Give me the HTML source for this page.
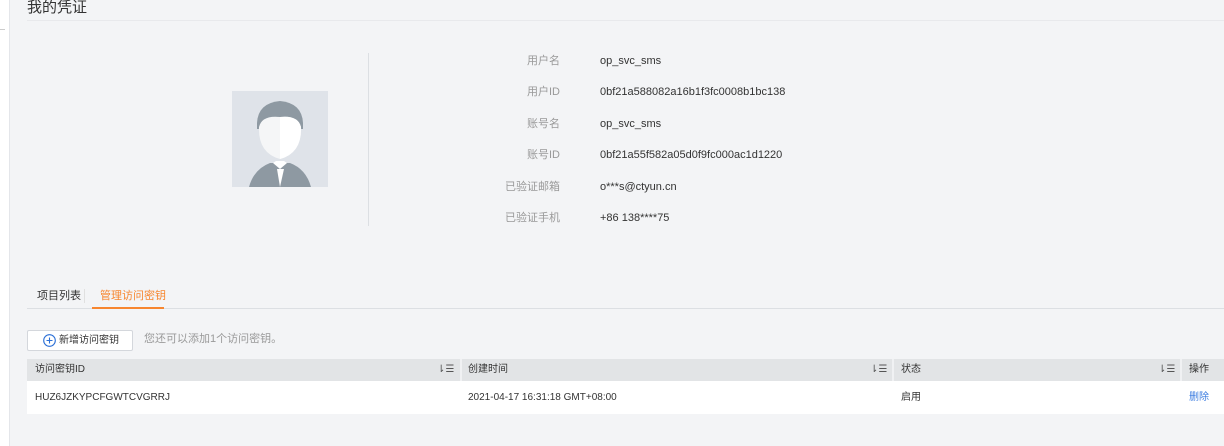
<!DOCTYPE html>
<html><head><meta charset="utf-8"><style>
*{margin:0;padding:0;box-sizing:border-box}
body{width:1224px;height:446px;overflow:hidden;background:#f3f4f6;font-family:"Liberation Sans","Noto Sans CJK SC",sans-serif;position:relative;color:#333}
.abs{position:absolute;line-height:14px;white-space:nowrap}
.lbl{position:absolute;right:664px;font-size:11px;line-height:14px;color:#999;text-align:right;white-space:nowrap}
.val{position:absolute;left:600px;font-size:11px;line-height:14px;color:#333;white-space:nowrap}
.t{font-size:10px;line-height:14px}
</style></head><body>
<div class="abs" style="left:0;top:0;width:10px;height:446px;background:#fff;border-right:1px solid #e4e6ea"></div>
<div class="abs" style="left:0;top:29px;width:5px;height:1px;background:#ccc"></div>
<div class="abs" style="left:27px;top:-1px;font-size:15px;line-height:18px;color:#333">我的凭证</div>
<div class="abs" style="left:27px;top:20px;width:1197px;height:1px;background:#e8e9ec"></div>
<div class="abs" style="left:368px;top:53px;width:1px;height:173px;background:#dcdfe3"></div>
<svg class="abs" style="left:232px;top:91px" width="96" height="96" viewBox="0 0 96 96">
<rect width="96" height="96" fill="#dfe3e9"/>
<path d="M17 96 Q22 78 38 72 L58 72 Q74 78 79 96Z" fill="#8e99a2"/>
<path d="M41 72 L48 78 L55 72 L52 70 L44 70Z" fill="#fff"/>
<path d="M45 78 L48 96 L52 78Z" fill="#fff"/>
<path d="M25 32 Q26 12 48 10 Q70 12 71 32 L71 38 L25 38Z" fill="#8e99a2"/>
<path d="M27 36 Q26 62 48 68 Q70 62 69 36 Q66 24 48 26 Q30 24 27 36Z" fill="#f5f6f7"/>
<path d="M48 26 Q66 24 69 36 Q70 62 48 68Z" fill="#fff"/>
</svg>
<div class="lbl" style="top:54px">用户名</div><div class="val" style="top:54px">op_svc_sms</div>
<div class="lbl" style="top:85px">用户ID</div><div class="val" style="top:85px">0bf21a588082a16b1f3fc0008b1bc138</div>
<div class="lbl" style="top:117px">账号名</div><div class="val" style="top:117px">op_svc_sms</div>
<div class="lbl" style="top:148px">账号ID</div><div class="val" style="top:148px">0bf21a55f582a05d0f9fc000ac1d1220</div>
<div class="lbl" style="top:180px">已验证邮箱</div><div class="val" style="top:180px">o***s@ctyun.cn</div>
<div class="lbl" style="top:211px">已验证手机</div><div class="val" style="top:211px">+86 138****75</div>
<div class="abs" style="left:37px;top:289px;font-size:11px;color:#333">项目列表</div>
<div class="abs" style="left:84px;top:289px;width:1px;height:14px;background:#e0e0e0"></div>
<div class="abs" style="left:100px;top:289px;font-size:11px;color:#f7862f">管理访问密钥</div>
<div class="abs" style="left:27px;top:308px;width:1197px;height:1px;background:#dcdfe3"></div>
<div class="abs" style="left:92px;top:307px;width:72px;height:2px;background:#f7862f"></div>
<div class="abs" style="left:27px;top:330px;width:106px;height:21px;background:#fff;border:1px solid #d4d7dc;border-radius:2px;font-size:10px;color:#333;display:flex;align-items:center;padding-left:15px">
<svg width="13" height="13" viewBox="0 0 13 13" style="margin-right:3px"><circle cx="6.5" cy="6.5" r="5.8" fill="none" stroke="#2b6fd6" stroke-width="1.1"/><path d="M6.5 3.5v6M3.5 6.5h6" stroke="#2b6fd6" stroke-width="1.1"/></svg>新增访问密钥</div>
<div class="abs" style="left:144px;top:332px;font-size:11px;color:#999">您还可以添加1个访问密钥。</div>
<div class="abs" style="left:27px;top:359px;width:1197px;height:22px;background:#e2e4e6"></div>
<div class="abs" style="left:460px;top:359px;width:2px;height:22px;background:#f0f1f3"></div>
<div class="abs" style="left:892px;top:359px;width:2px;height:22px;background:#f0f1f3"></div>
<div class="abs" style="left:1180px;top:359px;width:2px;height:22px;background:#f0f1f3"></div>
<div class="abs t" style="left:35px;top:363px;color:#333">访问密钥ID</div>
<div class="abs t" style="left:437px;top:363px;color:#555">⇂☰</div>
<div class="abs t" style="left:468px;top:363px;color:#333">创建时间</div>
<div class="abs t" style="left:870px;top:363px;color:#555">⇂☰</div>
<div class="abs t" style="left:901px;top:363px;color:#333">状态</div>
<div class="abs t" style="left:1158px;top:363px;color:#555">⇂☰</div>
<div class="abs t" style="left:1189px;top:363px;color:#333">操作</div>
<div class="abs" style="left:27px;top:381px;width:1197px;height:33px;background:#fff"></div>
<div class="abs t" style="left:35px;top:391px;color:#333">HUZ6JZKYPCFGWTCVGRRJ</div>
<div class="abs t" style="left:468px;top:391px;color:#333">2021-04-17 16:31:18 GMT+08:00</div>
<div class="abs t" style="left:901px;top:391px;color:#333">启用</div>
<div class="abs t" style="left:1189px;top:391px;color:#3a7be0">删除</div>
</body></html>
